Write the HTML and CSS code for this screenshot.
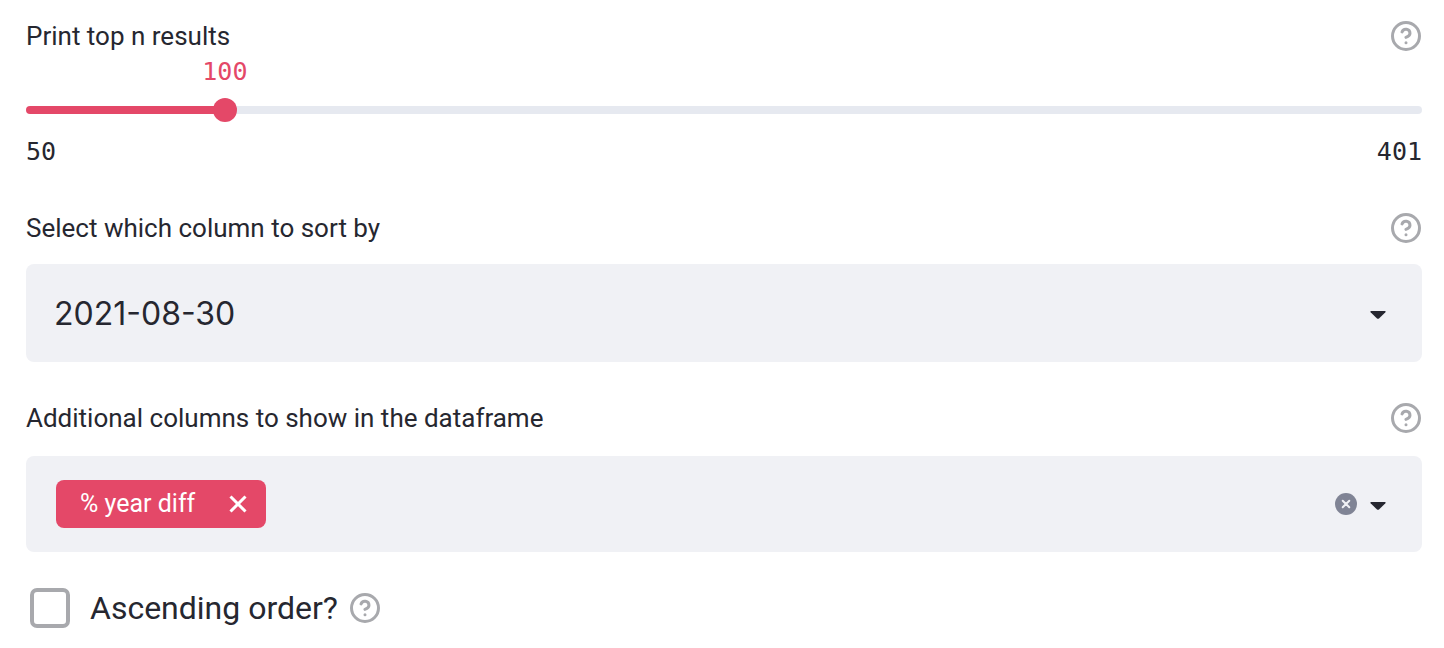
FILE: index.html
```html
<!DOCTYPE html>
<html lang="en">
<head>
<meta charset="utf-8">
<meta name="viewport" content="width=device-width, initial-scale=1">
<title>Dataframe options</title>
<link rel="stylesheet" href="styles.css">
</head>
<body>
<svg class="sprite" aria-hidden="true">
  <symbol id="icon-help" viewBox="1 1 22 22">
    <circle cx="12" cy="12" r="9.900"/>
    <path d="M9.090 9a3 3 0 0 1 5.830 1c0 2-3 3-3 3M12 17h.01"/>
  </symbol>
  <symbol id="icon-caret" viewBox="0 -3 16 11">
    <path d="M1 0h14q1 .5.4 1.200L9 7.400q-1 .9-2 0L.6 1.200Q0 .5 1 0z"/>
  </symbol>
</svg>
<form class="options">
  <div class="field field-slider">
    <div class="field-head">
      <label for="top-n">Print top n results</label>
      <button class="help" type="button" aria-label="Help: number of results"><svg><use href="#icon-help"/></svg></button>
    </div>
    <div class="slider" style="--value: 14.245%">
      <div class="slider-value"><output for="top-n">100</output></div>
      <div class="slider-bar">
        <div class="slider-track"></div>
        <input id="top-n" type="range" min="50" max="401" value="100">
      </div>
      <div class="slider-limits"><span>50</span><span>401</span></div>
    </div>
  </div>

  <div class="field field-select">
    <div class="field-head">
      <label for="sort-by">Select which column to sort by</label>
      <button class="help" type="button" aria-label="Help: sort column"><svg><use href="#icon-help"/></svg></button>
    </div>
    <div class="select-box">
      <select id="sort-by"><option>2021-08-30</option></select>
      <svg class="caret" aria-hidden="true"><use href="#icon-caret"/></svg>
    </div>
  </div>

  <div class="field field-multi">
    <div class="field-head">
      <label for="columns">Additional columns to show in the dataframe</label>
      <button class="help" type="button" aria-label="Help: additional columns"><svg><use href="#icon-help"/></svg></button>
    </div>
    <div class="multi-box">
      <span class="tag">% year diff
        <button type="button" aria-label="Remove % year diff"><svg viewBox="0 0 18 18"><path d="M1.500 1.500l15 15M16.500 1.500l-15 15"/></svg></button>
      </span>
      <input id="columns" type="text" autocomplete="off">
      <button class="clear" type="button" aria-label="Clear all"><svg viewBox="0 0 22 22"><circle cx="11" cy="11" r="11"/><path d="M7.700 7.700l6.600 6.600M14.300 7.700l-6.600 6.600"/></svg></button>
      <button class="open" type="button" aria-label="Open list"><svg class="caret"><use href="#icon-caret"/></svg></button>
    </div>
  </div>

  <div class="check-row">
    <input id="ascending" type="checkbox">
    <label for="ascending">Ascending order?</label>
    <button class="help" type="button" aria-label="Help: ascending order"><svg><use href="#icon-help"/></svg></button>
  </div>
</form>
<script src="script.js"></script>
</body>
</html>
```
FILE: styles.css
```css
:root {
  --accent: #e44868;
  --text: #262730;
  --panel: #f0f1f5;
  --muted: #a8a9ad;
}

* { box-sizing: border-box; }

body {
  margin: 0;
  background: #fff;
  color: var(--text);
  font-family: Roboto, "Liberation Sans", sans-serif;
  font-size: 26px;
  line-height: 32px;
}

button {
  padding: 0;
  border: 0;
  background: none;
  color: inherit;
  cursor: pointer;
}

svg { display: block; }

.sprite { position: absolute; width: 0; height: 0; }

.options {
  display: flex;
  flex-direction: column;
  gap: 40px;
  padding: 20px 22px 20px 26px;
}

.field-head {
  display: flex;
  align-items: center;
  justify-content: space-between;
}

.help svg {
  width: 30px;
  height: 30px;
  margin-right: 1px;
  fill: none;
  stroke: var(--muted);
  stroke-width: 2.2;
  stroke-linecap: round;
  stroke-linejoin: round;
}

.slider {
  padding: 4px 0;
  font-family: "DejaVu Sans Mono", monospace;
  font-size: 25px;
}

.slider-value {
  width: max-content;
  margin-left: var(--value);
  color: var(--accent);
}

.slider-value output {
  display: block;
  margin-left: -50%;
}

.slider-bar {
  display: grid;
  align-items: center;
  height: 44px;
}

.slider-track,
.slider-bar input { grid-area: 1 / 1; }

.slider-track {
  height: 8px;
  border-radius: 4px;
  background: linear-gradient(to right, var(--accent) var(--value), #e6e9f0 var(--value));
}

.slider-bar input {
  width: calc(100% + 24px);
  height: 24px;
  margin: 0 -12px;
  appearance: none;
  background: none;
}

.slider-bar input::-webkit-slider-thumb {
  width: 24px;
  height: 24px;
  appearance: none;
  border-radius: 50%;
  background: var(--accent);
}

.slider-limits {
  display: flex;
  justify-content: space-between;
  padding-top: 4px;
}

.select-box {
  display: grid;
  align-items: center;
  margin-top: 20px;
}

.select-box select,
.select-box .caret { grid-area: 1 / 1; }

.select-box select {
  width: 100%;
  height: 98px;
  padding: 0 80px 0 28px;
  appearance: none;
  border: 0;
  border-radius: 8px;
  background: var(--panel);
  color: inherit;
  font: 32px Inter, Roboto, sans-serif;
}

.select-box .caret {
  justify-self: end;
  margin-right: 36px;
  pointer-events: none;
}

.caret {
  width: 16px;
  height: 11px;
  fill: var(--text);
}

.multi-box {
  display: flex;
  align-items: center;
  margin-top: 22px;
  padding: 24px 36px 24px 30px;
  border-radius: 8px;
  background: var(--panel);
}

.tag {
  display: flex;
  align-items: center;
  gap: 34px;
  height: 48px;
  padding: 0 19px 0 24px;
  border-radius: 8px;
  background: var(--accent);
  color: #fff;
  font-size: 25px;
}

.tag svg {
  width: 18px;
  height: 18px;
  fill: none;
  stroke: currentColor;
  stroke-width: 3;
}

.multi-box input {
  flex: 1;
  min-width: 0;
  border: 0;
  outline: 0;
  background: none;
  font: inherit;
}

.clear { margin-right: 13px; }

.clear svg {
  width: 22px;
  height: 22px;
  fill: #808495;
  stroke: var(--panel);
}

.clear circle { stroke: none; }
.clear path { stroke-width: 2; stroke-linecap: round; }

.check-row {
  display: flex;
  align-items: center;
  margin-top: -4px;
  padding-left: 4px;
}

.check-row input {
  width: 40px;
  height: 40px;
  margin: 0 20px 0 0;
  appearance: none;
  border: 4px solid var(--muted);
  border-radius: 7px;
}

.check-row input:checked { background: var(--accent); }

.check-row label {
  margin-right: 12px;
  font-size: 32px;
}
```
FILE: script.js
```js
const slider = document.querySelector('#top-n');
slider.addEventListener('input', () => {
  const ratio = (slider.value - slider.min) / (slider.max - slider.min);
  slider.closest('.slider').style.setProperty('--value', `${ratio * 100}%`);
  document.querySelector('output').textContent = slider.value;
});
```
